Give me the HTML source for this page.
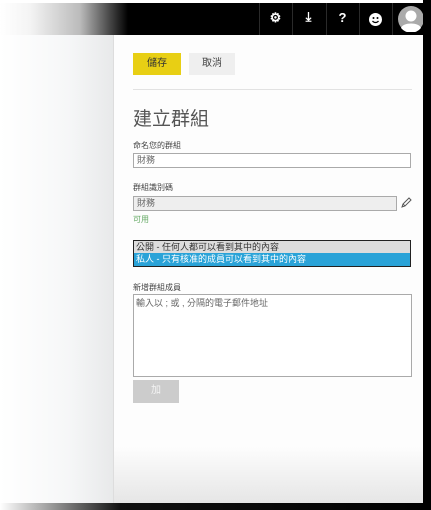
<!DOCTYPE html>
<html><head><meta charset="utf-8"><style>
*{margin:0;padding:0;box-sizing:border-box}
body{width:431px;height:510px;overflow:hidden;background:#fff;position:relative;font-family:"Liberation Sans","Noto Sans CJK TC",sans-serif;color:#333}
.abs{position:absolute}
.bar{left:0;top:3px;width:424px;height:32px;background:linear-gradient(90deg,#fff 0px,#f4f4f4 30px,#bbb 80px,#333 115px,#000 128px)}
.rb{left:423px;top:0;width:8px;height:510px;background:#000}
.bb{left:0;top:503px;width:431px;height:7px;background:linear-gradient(90deg,#fff,#888 60px,#111 120px,#000)}
.sep{top:3px;width:1px;height:32px;background:#2a2a2a}
.ic{top:10px;color:#fff;font-weight:bold;font-size:13px;width:33px;text-align:center}
.left{left:0;top:35px;width:113px;height:468px;background:linear-gradient(90deg,#fff,#f6f7f8 60%,#e8e9ea)}
.panel{left:113px;top:35px;width:310px;height:468px;background:linear-gradient(180deg,#fdfdfd 88%,#e6e6e6);border-left:1px solid #ddd}
.btn{font-size:10px;text-align:center;line-height:22px;height:22px}
.lbl{font-size:8px;color:#444}
.inp{border:1px solid #aaa;font-size:9px;color:#666;padding-left:3px;line-height:13px;background:#fff}
</style></head><body>
<div class="abs bar"></div>
<div class="abs sep" style="left:259px"></div>
<div class="abs sep" style="left:292px"></div>
<div class="abs sep" style="left:326px"></div>
<div class="abs sep" style="left:359px"></div>
<div class="abs sep" style="left:392px"></div>
<div class="abs ic" style="left:259px;top:10px">⚙</div>
<div class="abs ic" style="left:292px;top:9px">⤓</div>
<div class="abs ic" style="left:326px;top:10px">?</div>
<svg class="abs" style="left:369px;top:13px" width="13" height="13" viewBox="0 0 13 13"><circle cx="6.5" cy="6.5" r="6.5" fill="#fff"/><circle cx="4.5" cy="5" r="1" fill="#000"/><circle cx="8.5" cy="5" r="1" fill="#000"/><path d="M3.5 8c1.5 2 4.5 2 6 0" stroke="#000" stroke-width="1.2" fill="none"/></svg>
<svg class="abs" style="left:398px;top:6px" width="26" height="26" viewBox="0 0 26 26"><circle cx="13" cy="13" r="13" fill="#aaa"/><circle cx="13" cy="10" r="5.5" fill="#fff"/><path d="M3 22c2-6 18-6 20 0a13 13 0 0 1-20 0z" fill="#fff"/></svg>
<div class="abs left"></div>
<div class="abs panel"></div>
<div class="abs rb"></div>
<div class="abs bb"></div>
<div class="abs btn" style="left:133px;top:53px;width:48px;background:#e8cf14;color:#333">儲存</div>
<div class="abs btn" style="left:189px;top:53px;width:46px;background:#efefef;color:#444">取消</div>
<div class="abs" style="left:133px;top:89px;width:279px;height:1px;background:#e2e2e2"></div>
<div class="abs" style="left:133px;top:104px;font-size:19px;color:#555">建立群組</div>
<div class="abs lbl" style="left:133px;top:140px">命名您的群組</div>
<div class="abs inp" style="left:133px;top:153px;width:278px;height:15px">財務</div>
<div class="abs lbl" style="left:133px;top:182px">群組識別碼</div>
<div class="abs inp" style="left:133px;top:196px;width:264px;height:15px;background:#eee">財務</div>
<svg class="abs" style="left:400px;top:196px" width="13" height="13" viewBox="0 0 13 13"><path d="M2 11l1-3 6-6 2 2-6 6z M3 8l2 2" fill="none" stroke="#555" stroke-width="1"/></svg>
<div class="abs" style="left:133px;top:214px;font-size:8px;color:#6a6">可用</div>
<div class="abs" style="left:133px;top:240px;width:278px;height:27px;border:1px solid #222;background:#fff">
<div style="height:12px;background:#ddd;font-size:9px;line-height:12px;padding-left:2px;color:#333">公開 - 任何人都可以看到其中的內容</div>
<div style="height:13px;background:#2aa3d8;font-size:9px;line-height:13px;padding-left:2px;color:#fff">私人 - 只有核准的成員可以看到其中的內容</div>
</div>
<div class="abs lbl" style="left:133px;top:282px">新增群組成員</div>
<div class="abs inp" style="left:133px;top:294px;width:279px;height:83px;line-height:16px;padding-left:2px">輸入以 ; 或 , 分隔的電子郵件地址</div>
<div class="abs btn" style="left:133px;top:380px;width:46px;height:23px;background:#ccc;color:#f4f4f4">加</div>
</body></html>
